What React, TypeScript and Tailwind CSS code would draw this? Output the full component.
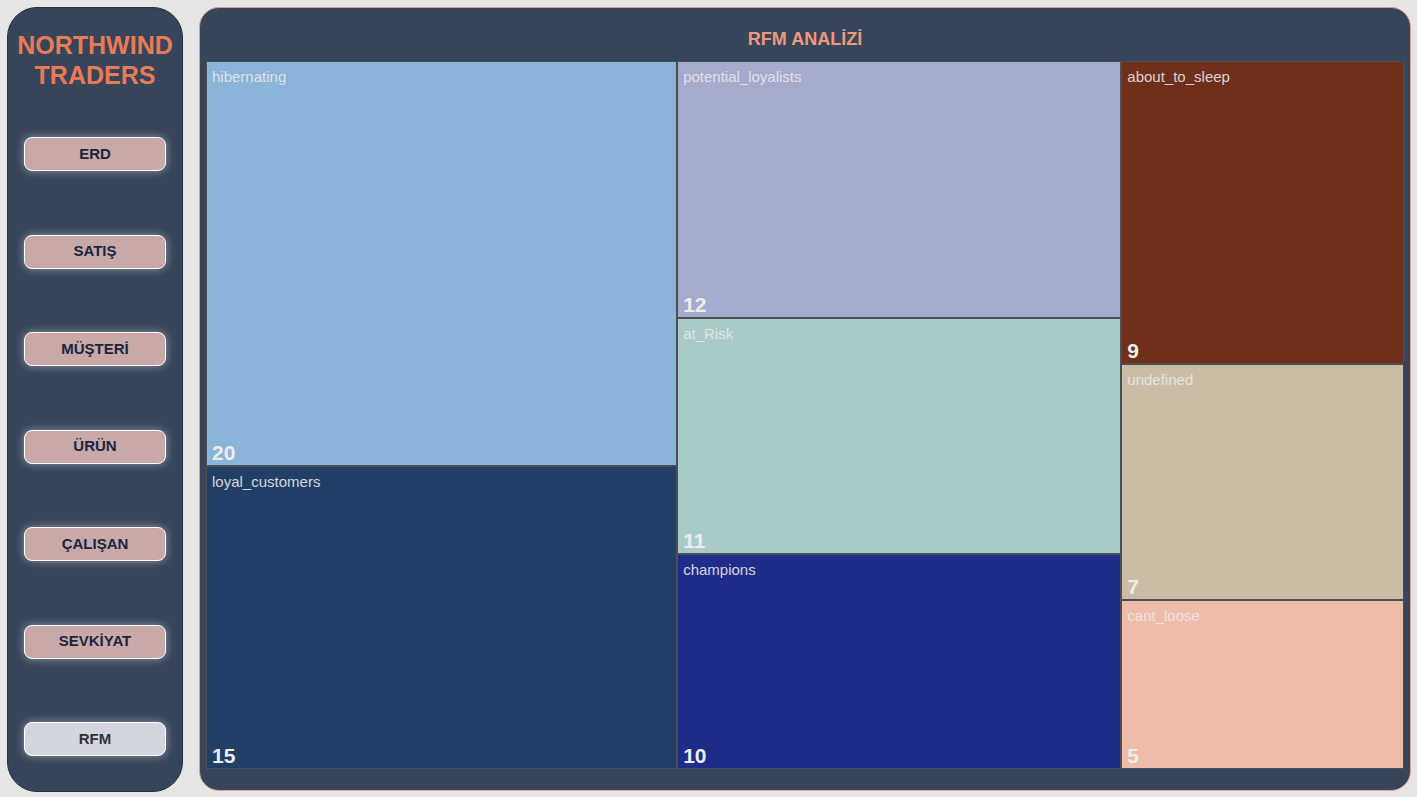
import React from 'react';

type Segment = { name: string; count: number; bg: string };

const columns: Segment[][] = [
  [
    { name: 'hibernating', count: 20, bg: 'bg-[#8ab4d8]' },
    { name: 'loyal_customers', count: 15, bg: 'bg-[#213f66]' },
  ],
  [
    { name: 'potential_loyalists', count: 12, bg: 'bg-[#a5abcd]' },
    { name: 'at_Risk', count: 11, bg: 'bg-[#a8cac8]' },
    { name: 'champions', count: 10, bg: 'bg-[#1f2d8a]' },
  ],
  [
    { name: 'about_to_sleep', count: 9, bg: 'bg-[#6f2f1b]' },
    { name: 'undefined', count: 7, bg: 'bg-[#cbbca6]' },
    { name: 'cant_loose', count: 5, bg: 'bg-[#efbcaa]' },
  ],
];

const navItems = ['ERD', 'SATIŞ', 'MÜŞTERİ', 'ÜRÜN', 'ÇALIŞAN', 'SEVKİYAT', 'RFM'];

function NavButton({ label, active }: { label: string; active?: boolean }) {
  return (
    <button
      className={`w-[142px] h-[34px] rounded-[8px] border-[1.5px] border-white text-[15px] font-bold shadow-[0_0_8px_rgba(255,255,255,0.45)] ${
        active ? 'bg-[#d3d6de] text-[#333]' : 'bg-[#c8a9a7] text-[#1a2540]'
      }`}
    >
      {label}
    </button>
  );
}

function Tile({ seg }: { seg: Segment }) {
  return (
    <div
      className={`${seg.bg} basis-0 min-h-0 overflow-hidden shadow-[inset_0_0_0_1px_#4b4f55] relative`}
      style={{ flexGrow: seg.count }}
    >
      <div className="h-full px-[6px] pt-[7px] flex flex-col justify-between">
        <div className="text-[15px] leading-[18px] text-[#e8e8e8]/90">{seg.name}</div>
        <div className="text-[21px] leading-[24px] font-bold text-[#ececec] pb-[1px]">{seg.count}</div>
      </div>
    </div>
  );
}

export default function App() {
  return (
    <div
      className="w-[1417px] h-[797px] bg-[#e6e6e6] flex gap-[16px] pl-[7px] pt-[7px] pb-[5px] pr-[6px]"
      style={{ fontFamily: '"Liberation Sans", Arial, sans-serif' }}
    >
      {/* Sidebar */}
      <aside className="w-[176px] h-[785px] rounded-[30px] bg-[#36455a] border border-[#26303e] flex flex-col items-center pt-[22px] pb-[35px]">
        <h1 className="text-[25px] leading-[30px] font-bold text-[#e87b56] text-center">
          NORTHWIND
          <br />
          TRADERS
        </h1>
        <nav className="flex-1 flex flex-col justify-between mt-[47px]">
          {navItems.map((n) => (
            <NavButton key={n} label={n} active={n === 'RFM'} />
          ))}
        </nav>
      </aside>

      {/* Main */}
      <main className="flex-1 h-[784px] rounded-[20px] bg-[#36455a] border border-[#e0a090] flex flex-col px-[6px] pb-[21px]">
        <div className="h-[53px] flex items-center justify-center pt-[10px]">
          <h2 className="text-[18px] font-bold text-[#f0987a]">RFM ANALİZİ</h2>
        </div>
        <div className="flex-1 flex min-h-0">
          {columns.map((col, i) => (
            <div
              key={i}
              className="basis-0 min-w-0 flex flex-col"
              style={{ flexGrow: col.reduce((s, c) => s + c.count, 0) }}
            >
              {col.map((seg) => (
                <Tile key={seg.name} seg={seg} />
              ))}
            </div>
          ))}
        </div>
      </main>
    </div>
  );
}
